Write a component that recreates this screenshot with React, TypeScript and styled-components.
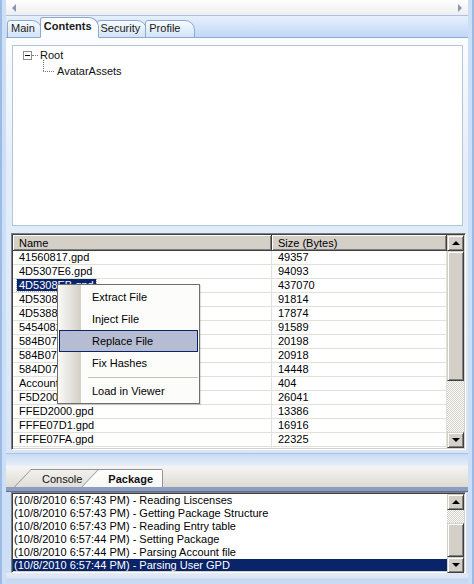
import React from 'react';
import styled, { createGlobalStyle, css } from 'styled-components';

const Global = createGlobalStyle`
  html, body { margin: 0; padding: 0; background: #c4d9f4; }
  body { font-family: "Liberation Sans", Arial, sans-serif; font-size: 11px; color: #000; }
  * { box-sizing: border-box; }
`;

const Frame = styled.div`
  width: 474px;
  height: 584px;
  display: flex;
  flex-direction: column;
  background: #cddff6;
  border-left: 2px solid #9bbae4;
  border-right: 2px solid #9bbae4;
  padding: 0 4px;
  overflow: hidden;
`;

const TopScroll = styled.div`
  height: 16px;
  flex: none;
  display: flex;
  align-items: center;
  justify-content: space-between;
  padding: 0 6px 0 6px;
  background: linear-gradient(#fefefe, #eeeeee);
  border-bottom: 1px solid #a9c1e2;
`;

const Arrow = styled.span<{ $dir: 'left' | 'right' }>`
  width: 0;
  height: 0;
  border-top: 4px solid transparent;
  border-bottom: 4px solid transparent;
  ${(p) =>
    p.$dir === 'left'
      ? css`border-right: 4px solid #8797b4;`
      : css`border-left: 4px solid #8797b4;`}
`;

const TabStrip = styled.div`
  height: 22px;
  flex: none;
  display: flex;
  align-items: flex-end;
  padding-left: 1px;
  background: linear-gradient(#e6f0fd, #c1d8f7);
  border-bottom: 1px solid #8ea9ce;
`;

const TopTab = styled.div<{ $active?: boolean; $last?: boolean }>`
  height: 18px;
  margin-bottom: -1px;
  margin-right: -2px;
  padding: 0 ${(p) => (p.$last ? 14 : 6)}px 2px 3px;
  display: flex;
  align-items: center;
  border: 1px solid #8ea9ce;
  border-radius: 3px 10px 0 0;
  background: linear-gradient(#f7fbff, #d2e3f8);
  color: #1a1a1a;
  position: relative;
  ${(p) =>
    p.$active &&
    css`
      height: 21px;
      font-weight: bold;
      background: #fbfdff;
      border-bottom-color: #fbfdff;
      z-index: 2;
      padding-bottom: 3px;
    `}
`;

const Panel = styled.div`
  height: 415px;
  flex: none;
  display: flex;
  flex-direction: column;
  gap: 7px;
  padding: 7px 2px 3px 5px;
  background: linear-gradient(#fbfdff 0, #e4eefa 30%, #d6e5f7 100%);
`;

const TreeBox = styled.div`
  height: 181px;
  margin: 0 3px 0 1px;
  background: #fff;
  border: 1px solid #b3c6dc;
  padding: 1px 0 0 0;
`;

const TreeRow = styled.div<{ $indent: number }>`
  height: 16px;
  display: flex;
  align-items: center;
  padding-left: ${(p) => p.$indent}px;
  position: relative;
`;

const Expander = styled.span`
  width: 9px;
  height: 9px;
  border: 1px solid #8c8c8c;
  background: #fff;
  display: flex;
  align-items: center;
  justify-content: center;
  &::after {
    content: '';
    width: 5px;
    height: 1px;
    background: #000;
  }
`;

const HDots = styled.span<{ $w: number }>`
  width: ${(p) => p.$w}px;
  height: 0;
  border-top: 1px dotted #7a7a7a;
`;

const Elbow = styled.span`
  width: 12px;
  height: 16px;
  position: relative;
  &::before {
    content: '';
    position: absolute;
    left: 0;
    top: -3px;
    height: 11px;
    border-left: 1px dotted #7a7a7a;
  }
  &::after {
    content: '';
    position: absolute;
    left: 0;
    top: 8px;
    width: 11px;
    border-top: 1px dotted #7a7a7a;
  }
`;

const NodeLabel = styled.span`
  margin-left: 2px;
  color: #111;
`;

const Sunken = css`
  border: 1px solid;
  border-color: #808080 #ffffff #ffffff #808080;
  box-shadow: inset 1px 1px #404040, inset -1px -1px #d4d0c8;
  padding: 1px;
`;

const ListBox = styled.div`
  height: 217px;
  flex: none;
  ${Sunken};
  background: #fff;
  display: flex;
  position: relative;
`;

const Table = styled.div`
  flex: 1;
  overflow: hidden;
`;

const Header = styled.div`
  display: grid;
  grid-template-columns: 259px 1fr;
  height: 16px;
`;

const HeadCell = styled.div`
  background: #d4d0c8;
  border-right: 1px solid #404040;
  border-bottom: 1px solid #404040;
  box-shadow: inset 1px 1px #ffffff, inset -1px -1px #808080;
  padding-left: 6px;
  display: flex;
  align-items: center;
`;

const Row = styled.div`
  display: grid;
  grid-template-columns: 259px 1fr;
  height: 14px;
`;

const Cell = styled.div`
  border-right: 1px solid #e2e0db;
  border-bottom: 1px solid #e2e0db;
  padding-left: 6px;
  line-height: 13px;
  white-space: nowrap;
  overflow: hidden;
`;

const Selected = styled.span`
  background: #0a246a;
  color: #fff;
  margin-left: -2px;
  padding: 0 2px;
  outline: 1px dotted #a7a7a7;
`;

const VScroll = styled.div`
  width: 17px;
  flex: none;
  display: flex;
  flex-direction: column;
`;

const SButton = styled.div<{ $h?: number }>`
  height: ${(p) => p.$h ?? 16}px;
  flex: none;
  background: #d4d0c8;
  border: 1px solid;
  border-color: #d4d0c8 #404040 #404040 #d4d0c8;
  box-shadow: inset 1px 1px #ffffff, inset -1px -1px #808080;
  display: flex;
  align-items: center;
  justify-content: center;
`;

const Tri = styled.span<{ $up?: boolean }>`
  width: 0;
  height: 0;
  border-left: 4px solid transparent;
  border-right: 4px solid transparent;
  ${(p) =>
    p.$up
      ? css`border-bottom: 4px solid #000;`
      : css`border-top: 4px solid #000;`}
`;

const Track = styled.div<{ $h?: number }>`
  flex: ${(p) => (p.$h ? 'none' : '1')};
  height: ${(p) => (p.$h ? `${p.$h}px` : 'auto')};
  background: repeating-conic-gradient(#ffffff 0 25%, #d4d0c8 0 50%) 0 0 / 2px 2px;
`;

const Menu = styled.div`
  position: absolute;
  left: 45px;
  top: 50px;
  width: 143px;
  height: 120px;
  border: 1px solid #6f6f6f;
  background: linear-gradient(to right, #f9f9f7 0, #d3d0c8 23px, #fcfcfa 23px);
  padding: 1px;
  box-shadow: 1px 1px 1px rgba(0, 0, 0, 0.12);
  z-index: 5;
`;

const MenuItem = styled.div<{ $hot?: boolean }>`
  height: 22px;
  display: flex;
  align-items: center;
  padding-left: 32px;
  border: 1px solid transparent;
  ${(p) =>
    p.$hot &&
    css`
      background: #b6bdd2;
      border-color: #0a246a;
    `}
`;

const MenuSep = styled.div`
  height: 6px;
  display: flex;
  align-items: center;
  padding-left: 29px;
  &::after {
    content: '';
    flex: 1;
    height: 1px;
    background: #c5c2b8;
  }
`;

const Splitter = styled.div`
  height: 13px;
  flex: none;
  background: linear-gradient(#a9c3e6 0, #a9c3e6 1px, #c8dbf3 1px, #e8eff9 100%);
`;

const BottomTabs = styled.div`
  height: 21px;
  flex: none;
  display: flex;
  align-items: flex-end;
  padding-left: 8px;
  background: linear-gradient(#f6f5f2, #dedbd3);
`;

const BTab = styled.div<{ $active?: boolean }>`
  height: 18px;
  display: flex;
  clip-path: polygon(17px 0, 100% 0, 100% 100%, 0 100%);
  background: #8d9498;
  position: relative;
  ${(p) =>
    p.$active
      ? css`
          margin-left: -19px;
          z-index: 2;
          border-top-right-radius: 2px;
        `
      : css`
          z-index: 1;
        `}
`;

const BTabFace = styled.div<{ $active?: boolean; $pl: number; $pr: number }>`
  flex: 1;
  margin: 1px 1px 0 1px;
  clip-path: polygon(16px 0, 100% 0, 100% 100%, 0 100%);
  display: flex;
  align-items: center;
  padding: 0 ${(p) => p.$pr}px 0 ${(p) => p.$pl}px;
  background: ${(p) => (p.$active ? 'linear-gradient(#ffffff, #f7f7f5)' : 'linear-gradient(#f1f0ec, #e0ded7)')};
  font-weight: ${(p) => (p.$active ? 'bold' : 'normal')};
  color: #111;
`;

const Band = styled.div`
  height: 5px;
  flex: none;
  background: #8c9cc2;
  border-bottom: 1px solid #5d6c90;
`;

const LogBox = styled.div`
  height: 81px;
  flex: none;
  margin: 0 2px 0 5px;
  ${Sunken};
  background: #fff;
  display: flex;
`;

const Lines = styled.div`
  flex: 1;
  overflow: hidden;
`;

const Line = styled.div<{ $sel?: boolean }>`
  height: 13px;
  line-height: 13px;
  padding-left: 1px;
  white-space: nowrap;
  ${(p) =>
    p.$sel &&
    css`
      background: #0a246a;
      color: #fff;
    `}
`;

const Bottom = styled.div`
  flex: 1;
  background: linear-gradient(#e4ebf5 0, #dbe4f2 5px, #c6d8f0 6px, #c9dbf3 100%);
`;

const rows: [string, string][] = [
  ['41560817.gpd', '49357'],
  ['4D5307E6.gpd', '94093'],
  ['4D5308EB.gpd', '437070'],
  ['4D5308F0.gpd', '91814'],
  ['4D5388C6.gpd', '17874'],
  ['5454082F.gpd', '91589'],
  ['584B07D1.gpd', '20198'],
  ['584B07D2.gpd', '20918'],
  ['584D07D1.gpd', '14448'],
  ['Account', '404'],
  ['F5D20000.gpd', '26041'],
  ['FFED2000.gpd', '13386'],
  ['FFFE07D1.gpd', '16916'],
  ['FFFE07FA.gpd', '22325'],
  ['FFFF0000.gpd', '25894'],
];

const logs = [
  '(10/8/2010 6:57:43 PM) - Reading Liscenses',
  '(10/8/2010 6:57:43 PM) - Getting Package Structure',
  '(10/8/2010 6:57:43 PM) - Reading Entry table',
  '(10/8/2010 6:57:44 PM) - Setting Package',
  '(10/8/2010 6:57:44 PM) - Parsing Account file',
  '(10/8/2010 6:57:44 PM) - Parsing User GPD',
];

export default function App() {
  return (
    <>
      <Global />
      <Frame>
        <TopScroll>
          <Arrow $dir="left" />
          <Arrow $dir="right" />
        </TopScroll>
        <TabStrip>
          <TopTab>Main</TopTab>
          <TopTab $active>Contents</TopTab>
          <TopTab>Security</TopTab>
          <TopTab $last>Profile</TopTab>
        </TabStrip>
        <Panel>
          <TreeBox>
            <TreeRow $indent={10}>
              <Expander />
              <HDots $w={6} />
              <NodeLabel>Root</NodeLabel>
            </TreeRow>
            <TreeRow $indent={30}>
              <Elbow />
              <NodeLabel>AvatarAssets</NodeLabel>
            </TreeRow>
          </TreeBox>
          <ListBox>
            <Table>
              <Header>
                <HeadCell>Name</HeadCell>
                <HeadCell>Size (Bytes)</HeadCell>
              </Header>
              {rows.map(([n, s], i) => (
                <Row key={n}>
                  <Cell>{i === 2 ? <Selected>{n}</Selected> : n}</Cell>
                  <Cell>{s}</Cell>
                </Row>
              ))}
            </Table>
            <VScroll>
              <SButton>
                <Tri $up />
              </SButton>
              <SButton $h={130} />
              <Track />
              <SButton>
                <Tri />
              </SButton>
            </VScroll>
            <Menu>
              <MenuItem>Extract File</MenuItem>
              <MenuItem>Inject File</MenuItem>
              <MenuItem $hot>Replace File</MenuItem>
              <MenuItem>Fix Hashes</MenuItem>
              <MenuSep />
              <MenuItem>Load in Viewer</MenuItem>
            </Menu>
          </ListBox>
        </Panel>
        <Splitter />
        <BottomTabs>
          <BTab>
            <BTabFace $pl={27} $pr={17}>Console</BTabFace>
          </BTab>
          <BTab $active>
            <BTabFace $active $pl={26} $pr={9}>Package</BTabFace>
          </BTab>
        </BottomTabs>
        <Band />
        <LogBox>
          <Lines>
            {logs.map((l, i) => (
              <Line key={l} $sel={i === logs.length - 1}>
                {l}
              </Line>
            ))}
          </Lines>
          <VScroll>
            <SButton>
              <Tri $up />
            </SButton>
            <Track $h={13} />
            <SButton $h={34} />
            <Track />
            <SButton>
              <Tri />
            </SButton>
          </VScroll>
        </LogBox>
        <Bottom />
      </Frame>
    </>
  );
}
